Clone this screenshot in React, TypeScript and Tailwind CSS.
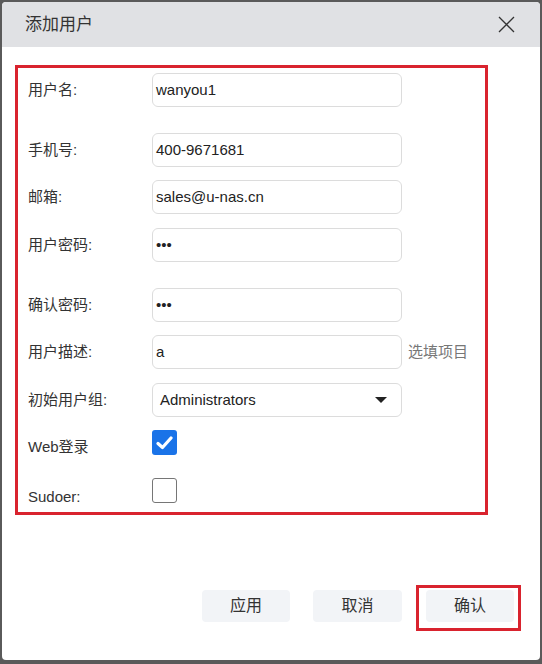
import React from 'react';

const font = { fontFamily: '"Liberation Sans", "Noto Sans CJK SC", sans-serif' };

function Field({ label, value, top, hint }: { label: string; value: string; top: string; hint?: string }) {
    return (
        <div className={`flex items-center h-[34px] ${top}`}>
            <div className="w-[124px] text-[15px] text-[#333]">{label}</div>
            <div className="w-[250px] h-[34px] border border-[#dcdcdc] rounded-[6px] flex items-center pl-[3px] text-[15px] text-[#222]">
                {value}
            </div>
            {hint && <div className="ml-[6px] text-[15px] text-[#777]">{hint}</div>}
        </div>
    );
}

export default function App() {
    return (
        <div className="w-[542px] h-[664px] bg-[#5a5a5a] pt-[2px] px-[2px] pb-[4px]" style={font}>
            <div className="w-full h-full bg-white rounded-[4px] overflow-hidden flex flex-col">
                {/* Header */}
                <div className="h-[45px] bg-[#e0e1e4] flex items-center justify-between pl-[23px] pr-[25px]">
                    <span className="text-[17px] text-[#333]">添加用户</span>
                    <svg width="17" height="17" viewBox="0 0 17 17" fill="none" stroke="#333" strokeWidth="1.3">
                        <path d="M1 1 L16 16 M16 1 L1 16" />
                    </svg>
                </div>

                {/* Form */}
                <div className="ml-[13px] mt-[18px] w-[473px] border-[3px] border-[#d9232e] pl-[10px] pt-[5px]">
                    <Field label="用户名:" value="wanyou1" top="" />
                    <Field label="手机号:" value="400-9671681" top="mt-[26px]" />
                    <Field label="邮箱:" value="sales@u-nas.cn" top="mt-[13px]" />
                    <Field label="用户密码:" value="•••" top="mt-[14px]" />
                    <Field label="确认密码:" value="•••" top="mt-[26px]" />
                    <Field label="用户描述:" value="a" top="mt-[13px]" hint="选填项目" />

                    <div className="flex items-center h-[34px] mt-[14px]">
                        <div className="w-[124px] text-[15px] text-[#333]">初始用户组:</div>
                        <div className="w-[250px] h-[34px] border border-[#dcdcdc] rounded-[6px] flex items-center justify-between pl-[7px] pr-[14px] text-[15px] text-[#222]">
                            <span>Administrators</span>
                            <svg width="12" height="6" viewBox="0 0 12 6">
                                <path d="M0 0 L12 0 L6 6 Z" fill="#222" />
                            </svg>
                        </div>
                    </div>

                    <div className="flex h-[34px] mt-[13px]">
                        <div className="w-[124px] text-[15px] text-[#333] self-center">Web登录</div>
                        <div className="w-[25px] h-[25px] rounded-[3px] bg-[#1a73e8] flex items-center justify-center">
                            <svg width="17" height="14" viewBox="0 0 17 14" fill="none" stroke="white" strokeWidth="3.2" strokeLinecap="round" strokeLinejoin="round">
                                <path d="M2 7.5 L6.5 11.5 L15 2" />
                            </svg>
                        </div>
                    </div>

                    <div className="flex h-[34px] mt-[14px]">
                        <div className="w-[124px] text-[15px] text-[#333] self-center pt-[4px]">Sudoer:</div>
                        <div className="w-[25px] h-[25px] rounded-[3px] border border-[#767676] bg-white" />
                    </div>
                </div>

                {/* Footer */}
                <div className="flex justify-end items-start mt-auto mb-[29px] pr-[19px]">
                    <button className="mt-[5px] w-[88px] h-[32px] rounded-[4px] bg-[#f2f4f7] text-[16px] text-[#333]">应用</button>
                    <button className="mt-[5px] ml-[23px] w-[89px] h-[32px] rounded-[4px] bg-[#f2f4f7] text-[16px] text-[#333]">取消</button>
                    <div className="ml-[14px] border-[3px] border-[#d9232e] pl-[7px] pr-[4px] pt-[2px] pb-[6px]">
                        <button className="w-[88px] h-[32px] rounded-[4px] bg-[#f2f4f7] text-[16px] text-[#333] block">确认</button>
                    </div>
                </div>
            </div>
        </div>
    );
}
